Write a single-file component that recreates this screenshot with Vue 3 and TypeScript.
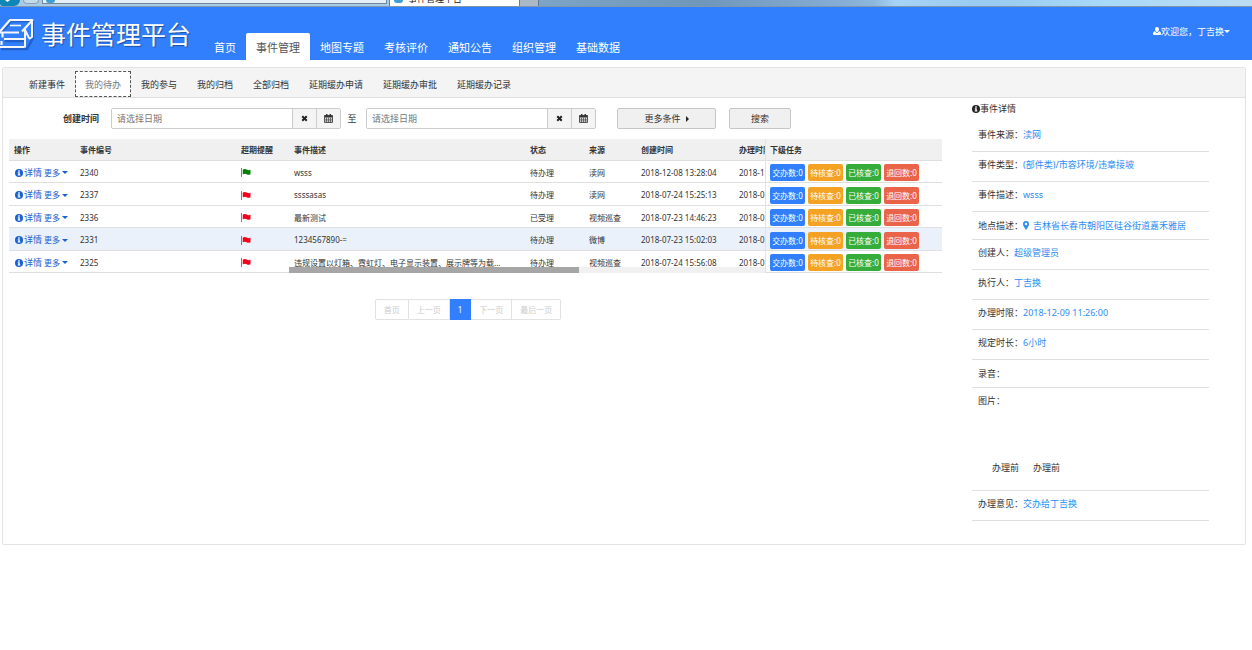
<script setup lang="ts">
import { ref } from 'vue'

interface EventRow {
  id: string
  flag: 'green' | 'red'
  desc: string
  status: string
  source: string
  created: string
  limit: string
}

interface DetailItem {
  label: string
  value: string
  pin?: boolean
  compact?: boolean
}

const navItems: string[] = ['首页', '事件管理', '地图专题', '考核评价', '通知公告', '组织管理', '基础数据']
const activeNav = ref('事件管理')

const tabs: string[] = ['新建事件', '我的待办', '我的参与', '我的归档', '全部归档', '延期缓办申请', '延期缓办审批', '延期缓办记录']
const activeTab = ref('我的待办')

const startDate = ref('')
const endDate = ref('')

const rows: EventRow[] = [
  { id: '2340', flag: 'green', desc: 'wsss', status: '待办理', source: '渎网', created: '2018-12-08 13:28:04', limit: '2018-1' },
  { id: '2337', flag: 'red', desc: 'ssssasas', status: '待办理', source: '渎网', created: '2018-07-24 15:25:13', limit: '2018-0' },
  { id: '2336', flag: 'red', desc: '最新测试', status: '已受理', source: '视频巡查', created: '2018-07-23 14:46:23', limit: '2018-0' },
  { id: '2331', flag: 'red', desc: '1234567890-=', status: '待办理', source: '微博', created: '2018-07-23 15:02:03', limit: '2018-0' },
  { id: '2325', flag: 'red', desc: '违规设置以灯箱、霓虹灯、电子显示装置、展示牌等为载...', status: '待办理', source: '视频巡查', created: '2018-07-24 15:56:08', limit: '2018-0' },
]
const selectedId = ref('2331')

const badges = [
  { text: '交办数:0', kind: 'blue' },
  { text: '待核查:0', kind: 'orange' },
  { text: '已核查:0', kind: 'green' },
  { text: '退回数:0', kind: 'red' },
]

const details: DetailItem[] = [
  { label: '事件来源：', value: '渎网' },
  { label: '事件类型：', value: '(部件类)/市容环境/违章接坡' },
  { label: '事件描述：', value: 'wsss' },
  { label: '地点描述：', value: '吉林省长春市朝阳区硅谷街道嘉禾雅居', pin: true, compact: true },
  { label: '创建人：', value: '超级管理员' },
  { label: '执行人：', value: '丁吉换' },
  { label: '办理时限：', value: '2018-12-09 11:26:00' },
  { label: '规定时长：', value: '6小时' },
  { label: '录音：', value: '', compact: true },
]

const pages: string[] = ['首页', '上一页', '1', '下一页', '最后一页']
</script>

<template>
  <div class="page">
    <div class="browser">
      <span class="back"><svg viewBox="0 0 20 6" width="20" height="6"><path d="M5 0h5l-2.500 2z" fill="#fff" /></svg></span>
      <span class="forward"></span>
      <span class="address"><i class="ie"></i></span>
      <span class="window-tab"><i class="ie"></i><span class="tab-title">事件管理平台</span></span>
      <span class="new-tab"></span>
      <span class="glass"></span>
    </div>

    <header class="top">
      <div class="brand">
        <svg class="logo" viewBox="0 0 34 34" width="34" height="34">
          <path d="M1 16 11 4h22v17l-6 11H1M5 24h21" fill="none" stroke="#174aa8" stroke-opacity=".6" stroke-width="2.500" />
          <g fill="none" stroke="#f4f6f8" stroke-width="2.200" stroke-linejoin="round">
            <path d="M0 14.500 10 3h22.500L22 14.500" />
            <path d="M10 8.500h11" stroke-width="1.600" />
            <path d="M0 15.500h19M2.500 16v4.500M4 22h20.500M1.500 24v4M0 30h24.500" />
            <path d="M25 12v18.500M24.500 12l4.500 9M32 4v16l-3 2" stroke-width="2" />
          </g>
        </svg>
        <h1>事件管理平台</h1>
      </div>
      <nav class="main-nav">
        <a v-for="n in navItems" :key="n" href="#" :class="{ active: n === activeNav }" @click.prevent="activeNav = n">{{ n }}</a>
      </nav>
      <button class="user" type="button">
        <svg viewBox="0 0 16 16" width="8" height="8"><path d="M8 0a4 4 0 0 0-4 4c0 2 1 4.500 2.500 5.300L8 10l1.500-.7C11 8.500 12 6 12 4a4 4 0 0 0-4-4zM4 8.500C1 9 0 11 0 14q0 2 2 2h12q2 0 2-2c0-3-1-5-4-5.500Q10 12 8 12T4 8.500z" fill="#fff" /></svg>
        <span>欢迎您，丁吉换</span>
        <i class="caret"></i>
      </button>
    </header>

    <main class="panel">
      <nav class="tabs">
        <a v-for="t in tabs" :key="t" href="#" :class="{ active: t === activeTab }" @click.prevent="activeTab = t">{{ t }}</a>
      </nav>

      <div class="body">
        <section class="list">
          <form class="filters" @submit.prevent>
            <label class="caption" for="start">创建时间</label>
            <div class="date">
              <input id="start" v-model="startDate" type="text" placeholder="请选择日期" />
              <button type="button" aria-label="清空" @click="startDate = ''">
                <svg viewBox="0 0 14 14" width="7" height="7"><path d="M2.500 2.500l9 9M11.500 2.500l-9 9" stroke="#222" stroke-width="4" /></svg>
              </button>
              <button type="button" aria-label="选择日期">
                <svg viewBox="0 0 18 18" width="9" height="9"><path d="M1 3h16v14H1z" fill="none" stroke="#333" stroke-width="1.600" /><path d="M1 3h16v4H1zM4 0h3v5H4zM11 0h3v5h-3z" fill="#333" /><path d="M1 10.500h16M1 13.800h16M5 7v10M9 7v10M13 7v10" stroke="#333" stroke-width="1.200" /></svg>
              </button>
            </div>
            <label class="to" for="end">至</label>
            <div class="date">
              <input id="end" v-model="endDate" type="text" placeholder="请选择日期" />
              <button type="button" aria-label="清空" @click="endDate = ''">
                <svg viewBox="0 0 14 14" width="7" height="7"><path d="M2.500 2.500l9 9M11.500 2.500l-9 9" stroke="#222" stroke-width="4" /></svg>
              </button>
              <button type="button" aria-label="选择日期">
                <svg viewBox="0 0 18 18" width="9" height="9"><path d="M1 3h16v14H1z" fill="none" stroke="#333" stroke-width="1.600" /><path d="M1 3h16v4H1zM4 0h3v5H4zM11 0h3v5h-3z" fill="#333" /><path d="M1 10.500h16M1 13.800h16M5 7v10M9 7v10M13 7v10" stroke="#333" stroke-width="1.200" /></svg>
              </button>
            </div>
            <button class="btn more-filters" type="button">更多条件<i class="caret-right"></i></button>
            <button class="btn search" type="submit">搜索</button>
          </form>

          <div class="table-wrap">
            <table>
              <colgroup>
                <col class="c-op" /><col class="c-id" /><col class="c-flag" /><col /><col class="c-status" />
                <col class="c-source" /><col class="c-created" /><col class="c-limit" /><col class="c-task" />
              </colgroup>
              <thead>
                <tr>
                  <th>操作</th><th>事件编号</th><th>超期提醒</th><th>事件描述</th><th>状态</th>
                  <th>来源</th><th>创建时间</th><th>办理时限</th><th class="task">下级任务</th>
                </tr>
              </thead>
              <tbody>
                <tr v-for="r in rows" :key="r.id" :class="{ selected: r.id === selectedId }">
                  <td>
                    <div class="ops">
                      <svg viewBox="0 0 16 16" width="8" height="8"><circle cx="8" cy="8" r="8" fill="#1a62d0" /><path d="M6.500 2.500h3v2.800h-3zM5.500 6.500h4V11h1.200v2H5.500v-2h1.200V8.500H5.500z" fill="#fff" /></svg>
                      <a class="detail" href="#" @click.prevent="selectedId = r.id">详情</a>
                      <a class="more" href="#" @click.prevent>更多<i class="caret"></i></a>
                    </div>
                  </td>
                  <td>{{ r.id }}</td>
                  <td>
                    <svg class="flag" :class="r.flag" viewBox="0 0 20 18" width="10" height="9"><path d="M1 0v18" stroke-width="2" stroke="currentColor" stroke-opacity=".7" /><path d="M3.500 3q4-2.500 8 0t7.500 0v9.500q-4 2-7.500 0t-8 0z" fill="currentColor" /></svg>
                  </td>
                  <td>{{ r.desc }}</td>
                  <td>{{ r.status }}</td>
                  <td>{{ r.source }}</td>
                  <td>{{ r.created }}</td>
                  <td>{{ r.limit }}</td>
                  <td class="task">
                    <div class="badges">
                      <span v-for="b in badges" :key="b.kind" class="badge" :class="b.kind">{{ b.text }}</span>
                    </div>
                  </td>
                </tr>
              </tbody>
            </table>
            <div class="scrollbar"><div class="thumb"></div></div>
          </div>

          <nav class="pager">
            <button v-for="p in pages" :key="p" type="button" :class="{ current: p === '1' }">{{ p }}</button>
          </nav>
        </section>

        <aside class="info">
          <h2>
            <svg viewBox="0 0 16 16" width="8" height="8"><circle cx="8" cy="8" r="8" fill="#222" /><path d="M6.500 2.500h3v2.800h-3zM5.500 6.500h4V11h1.200v2H5.500v-2h1.200V8.500H5.500z" fill="#fff" /></svg>
            事件详情
          </h2>
          <div v-for="d in details" :key="d.label" class="item" :class="{ compact: d.compact }">
            <span>{{ d.label }}</span>
            <svg v-if="d.pin" class="pin" viewBox="0 0 12 18" width="6" height="9"><path d="M6 0a6 6 0 0 0-6 6c0 2 .5 3 1.500 5L6 18l4.500-7C11.500 9 12 8 12 6a6 6 0 0 0-6-6zm0 3.500a2.500 2.500 0 1 1 0 5 2.500 2.500 0 0 1 0-5z" fill="#2b8cf5" /></svg>
            <span class="value">{{ d.value }}</span>
          </div>
          <div class="item pictures">
            <span>图片：</span>
            <div class="captions"><span>办理前</span><span>办理前</span></div>
          </div>
          <div class="item"><span>办理意见：</span><span class="value">交办给丁吉换</span></div>
        </aside>
      </div>
    </main>
  </div>
</template>

<style>
body {
  margin: 0;
  background: #fff;
}
</style>

<style scoped>
.page {
  font-family: "Noto Sans", "Noto Sans CJK SC", sans-serif;
  font-size: 9px;
  line-height: 13px;
  color: #333;
}
.page * {
  box-sizing: border-box;
}
a {
  color: inherit;
  text-decoration: none;
}
button,
input {
  font: inherit;
  color: inherit;
  margin: 0;
}
svg {
  flex: none;
}

/* window frame */
.browser {
  display: flex;
  height: 7px;
  overflow: hidden;
  border-bottom: 1px solid #7f97ad;
  background: #a9cbe6;
}
.back {
  width: 20px;
  background: #0f86b8;
  border-radius: 0 0 10px 4px;
}
.back svg {
  display: block;
}
.forward {
  width: 16px;
  height: 4px;
  margin: 0 3px;
  border: 1px solid #8aa3b8;
  border-top: 0;
  border-radius: 0 0 8px 8px;
  background: #c3dbec;
}
.address {
  flex: 0 1 345px;
  height: 4px;
  padding-left: 3px;
  border: 1px solid #73879a;
  border-top: 0;
  background: #e3eef7;
}
.window-tab {
  display: flex;
  flex: 0 0 131px;
  margin-left: 2px;
  padding-left: 4px;
  gap: 5px;
  background: #fff;
  border: solid #6d7f90;
  border-width: 0 1px;
  align-items: flex-end;
}
.tab-title {
  padding-bottom: 3px;
  font-size: 9px;
  line-height: 9px;
  color: #222;
}
.ie {
  display: block;
  width: 9px;
  height: 3px;
  border-radius: 0 0 5px 5px;
  background: #3d9fd6;
}
.window-tab .ie {
  align-self: flex-start;
}
.new-tab {
  width: 19px;
  background: #a9b9c8;
  border-right: 1px solid #63768a;
}
.glass {
  flex: 1;
  background: linear-gradient(90deg, #7da3c6, #7096ba 23%, #86aed6 43%, #8db8dc 47%, #a6d3f6 50%, #9acbf0 63%, #a9d9fb 80%, #bcdcf2);
}

/* header */
.top {
  display: flex;
  height: 53px;
  background: #317ffc;
  color: #fff;
}
.brand {
  display: flex;
  width: 204px;
  align-items: center;
  gap: 7px;
}
.brand h1 {
  margin: 0;
  font-size: 25px;
  line-height: 36px;
  font-weight: 400;
  text-shadow: 1px 1px 1px #1d50a8;
  white-space: nowrap;
}
.main-nav {
  display: flex;
  align-items: flex-end;
  flex: 1;
}
.main-nav a {
  padding: 0 10px;
  height: 27px;
  font-size: 11px;
  line-height: 29px;
  border-radius: 2px 2px 0 0;
}
.main-nav a.active {
  background: #fff;
  color: #555;
}
.user {
  display: flex;
  align-items: center;
  height: 14px;
  margin: 17px 22px 0 0;
  padding: 0;
  border: 0;
  background: none;
}
.caret {
  border: 3px solid transparent;
  border-top-color: currentColor;
  border-bottom-width: 0;
}

/* panel */
.panel {
  margin: 7px 6px 0 2px;
  border: 1px solid #e3e3e3;
  border-radius: 2px;
}
.tabs {
  display: flex;
  align-items: flex-end;
  height: 30px;
  padding-left: 16px;
  background: #f4f4f4;
  border-bottom: 1px solid #e0e0e0;
}
.tabs a {
  height: 26px;
  padding: 0 10px;
  line-height: 28px;
}
.tabs a.active {
  padding: 0 9px;
  border: 1px dashed #555;
  line-height: 26px;
  background: #fff;
  color: #777;
}
.body {
  display: flex;
  align-items: flex-start;
  padding: 4px 36px 23px 6px;
}
.list {
  flex: 1;
  min-width: 0;
}

/* filters */
.filters {
  display: flex;
  align-items: center;
  padding-top: 6px;
}
.caption {
  width: 102px;
  padding-left: 54px;
  font-weight: 700;
}
.date {
  display: flex;
  width: 230px;
  height: 21px;
  border: 1px solid #ccc;
  border-radius: 2px;
  overflow: hidden;
}
.date input {
  flex: 1;
  min-width: 0;
  padding: 0 5px;
  border: 0;
  background: #fff;
}
.date input::placeholder {
  color: #777;
  opacity: 1;
}
.date button {
  display: flex;
  align-items: center;
  justify-content: center;
  width: 24px;
  padding: 0;
  border: 0;
  border-left: 1px solid #ccc;
  background: #f4f4f4;
}
.to {
  width: 25px;
  padding-right: 3px;
  text-align: center;
}
.btn {
  display: flex;
  align-items: center;
  justify-content: center;
  height: 21px;
  padding: 0;
  gap: 5px;
  border: 1px solid #c6c6c6;
  border-radius: 2px;
  background: #f0f0f0;
}
.more-filters {
  width: 99px;
  margin-left: 21px;
}
.search {
  width: 62px;
  margin-left: 13px;
}
.caret-right {
  border: 3px solid transparent;
  border-left-color: #222;
  border-right-width: 0;
}

/* table */
.table-wrap {
  position: relative;
  margin-top: 10px;
}
table {
  width: 100%;
  table-layout: fixed;
  border-collapse: separate;
  border-spacing: 0;
  font-size: 8px;
  line-height: 12px;
}
.c-op { width: 66px; }
.c-id { width: 161px; }
.c-flag { width: 53px; }
.c-status { width: 59px; }
.c-source { width: 52px; }
.c-created { width: 98px; }
.c-limit { width: 31px; }
.c-task { width: 177px; }
th,
td {
  height: 22px;
  padding: 0 0 0 5px;
  border-bottom: 1px solid #dfdfdf;
  text-align: left;
  white-space: nowrap;
  overflow: hidden;
}
td {
  padding-top: 2px;
}
tr:nth-child(even) td {
  height: 23px;
}
th {
  background: #f0f0f0;
  font-weight: 700;
}
.task {
  border-left: 1px solid #e3e3e3;
  padding-left: 4px;
}
.selected td {
  background: #eaf1fa;
}
.ops {
  display: flex;
  align-items: center;
  padding-left: 1px;
  color: #1a62d0;
}
.detail {
  font-size: 9px;
  padding: 0 2px 0 1px;
}
.more {
  display: flex;
  align-items: center;
  gap: 2px;
}
.flag {
  display: block;
}
.flag.green { color: #008000; }
.flag.red { color: #f8001c; }
.badges {
  display: flex;
  gap: 3px;
}
.badge {
  width: 35px;
  border-radius: 2px;
  line-height: 17px;
  text-align: center;
  color: #fff;
}
.badge.blue { background: #317ffc; }
.badge.orange { background: #f3a224; }
.badge.green { background: #36ad3b; }
.badge.red { background: #ea644a; }
.scrollbar {
  position: absolute;
  left: 280px;
  right: 177px;
  bottom: 0;
  height: 6px;
  background: #f0f0f0;
}
.thumb {
  width: 61%;
  height: 100%;
  background: #a6a6a6;
}

/* pager */
.pager {
  display: flex;
  justify-content: center;
  margin-top: 26px;
  padding-right: 15px;
  font-size: 8px;
}
.pager button {
  height: 21px;
  padding: 0 8px;
  border: 1px solid #e2e2e2;
  border-left-width: 0;
  background: #fff;
  color: #ccc;
}
.pager button:first-child {
  border-left-width: 1px;
  border-radius: 2px 0 0 2px;
}
.pager button:last-child {
  border-radius: 0 2px 2px 0;
}
.pager button.current {
  border-color: #317ffc;
  background: #317ffc;
  color: #fff;
}

/* details */
.info {
  width: 237px;
  margin-left: 30px;
}
.info h2 {
  display: flex;
  align-items: center;
  height: 20px;
  margin: 0;
  padding-bottom: 7px;
  font-size: 9px;
  font-weight: 400;
}
.item {
  display: flex;
  align-items: center;
  height: 30px;
  padding: 0 6px 4px;
  border-bottom: 1px solid #dfdfdf;
  white-space: nowrap;
}
.item.compact {
  height: 28px;
  padding-bottom: 1px;
}
.value {
  color: #2b8cf5;
}
.pin {
  margin-right: 4px;
}
.item.pictures {
  flex-direction: column;
  align-items: flex-start;
  justify-content: space-between;
  height: 103px;
  padding: 6px 6px 16px;
}
.captions {
  display: flex;
  gap: 14px;
  padding-left: 14px;
}
</style>
